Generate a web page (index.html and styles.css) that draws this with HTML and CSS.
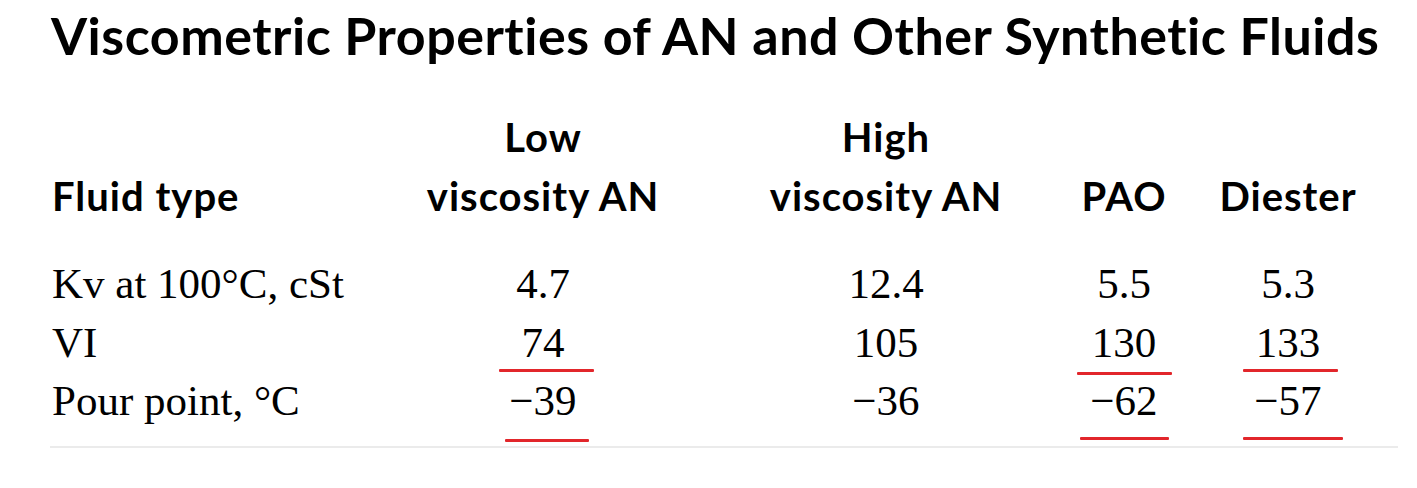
FILE: index.html
```html
<!DOCTYPE html>
<html lang="en">
<head>
<meta charset="utf-8">
<title>Viscometric Properties of AN and Other Synthetic Fluids</title>
<link rel="stylesheet" href="styles.css">
</head>
<body>
<main class="page">
  <h1 class="title">Viscometric Properties of AN and Other Synthetic Fluids</h1>
  <div class="grid">
    <div class="head head-left"><span>Fluid type</span></div>
    <div class="head"><span>Low</span><span>viscosity AN</span></div>
    <div class="head"><span>High</span><span>viscosity AN</span></div>
    <div class="head"><span>PAO</span></div>
    <div class="head"><span>Diester</span></div>

    <div class="cell cell-left">Kv at 100°C, cSt</div>
    <div class="cell">4.7</div>
    <div class="cell">12.4</div>
    <div class="cell">5.5</div>
    <div class="cell">5.3</div>

    <div class="cell cell-left">VI</div>
    <div class="cell">74<span class="mark mark-vi-low"></span></div>
    <div class="cell">105</div>
    <div class="cell">130<span class="mark mark-vi-pao"></span></div>
    <div class="cell">133<span class="mark mark-vi-di"></span></div>

    <div class="cell cell-left">Pour point, °C</div>
    <div class="cell">−39<span class="mark mark-pp-low"></span></div>
    <div class="cell">−36</div>
    <div class="cell">−62<span class="mark mark-pp-pao"></span></div>
    <div class="cell">−57<span class="mark mark-pp-di"></span></div>
  </div>
</main>
</body>
</html>
```

FILE: styles.css
```css
html, body {
  margin: 0;
  padding: 0;
  background: #ffffff;
}

.page {
  width: 1417px;
  height: 488px;
  overflow: hidden;
  color: #000000;
}

.title {
  margin: 4px 0 0 0;
  padding-left: 51px;
  font-family: "Lato", "Liberation Sans", sans-serif;
  font-weight: 700;
  font-size: 52px;
  line-height: 62px;
  letter-spacing: 0.5px;
  font-variant-ligatures: none;
  font-feature-settings: "liga" 0;
  white-space: nowrap;
}

.grid {
  display: grid;
  grid-template-columns: 334px 318px 368px 108px 220px;
  margin: 42px 0 0 50px;
  width: 1348px;
  padding-bottom: 15px;
  border-bottom: 2px solid #ebebeb;
}

.head {
  display: flex;
  flex-direction: column;
  justify-content: flex-end;
  align-items: center;
  height: 118px;
  margin-bottom: 29px;
  font-family: "Lato", "Liberation Sans", sans-serif;
  font-weight: 700;
  font-size: 40px;
  line-height: 59px;
  letter-spacing: 1px;
  font-variant-ligatures: none;
  white-space: nowrap;
}

.head-left {
  align-items: flex-start;
  padding-left: 2px;
}

.cell {
  position: relative;
  height: 58.5px;
  text-align: center;
  font-family: "Liberation Serif", "Times New Roman", serif;
  font-size: 43px;
  line-height: 58.5px;
  white-space: nowrap;
}

.cell-left {
  text-align: left;
  padding-left: 2px;
}

.mark {
  position: absolute;
  left: 50%;
  height: 3px;
  background: #e2262b;
  border-radius: 1px;
}

.mark-vi-low { top: 55px; width: 95px; margin-left: -44px; }
.mark-vi-pao { top: 58px; width: 95px; margin-left: -47px; }
.mark-vi-di  { top: 55px; width: 95px; margin-left: -45px; }
.mark-pp-low { top: 67px; width: 84px; margin-left: -38px; }
.mark-pp-pao { top: 65px; width: 89px; margin-left: -44px; }
.mark-pp-di  { top: 65px; width: 100px; margin-left: -45px; }
```
